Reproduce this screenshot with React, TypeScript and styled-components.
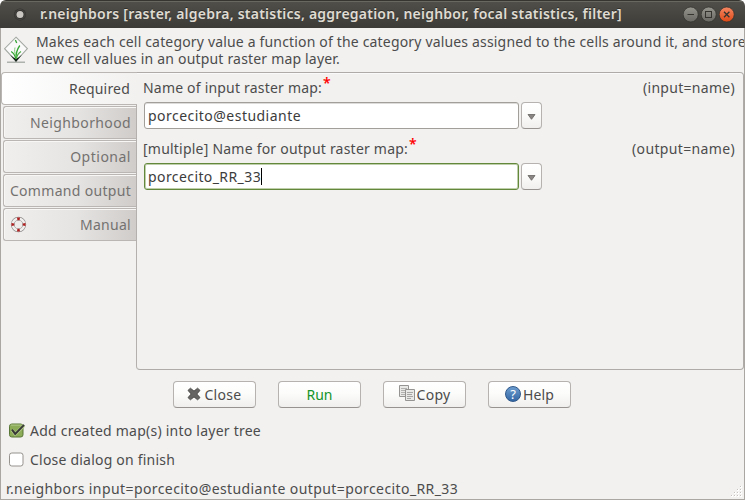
import React from 'react';
import styled, { createGlobalStyle, css } from 'styled-components';

const GlobalStyle = createGlobalStyle`
  *, *::before, *::after { box-sizing: border-box; }
  body { margin: 0; background: #fff; overflow: hidden; }
`;

const Window = styled.div`
  width: 745px;
  height: 500px;
  display: flex;
  flex-direction: column;
  overflow: hidden;
  border-radius: 6px 6px 0 0;
  background: #f2f1f0;
  color: #4c4c4c;
  font: 14px/17px "Noto Sans", "Open Sans", sans-serif;
  white-space: nowrap;
`;

const TitleBar = styled.header`
  height: 28px;
  flex: none;
  display: flex;
  align-items: center;
  padding: 0 10px 0 13px;
  color: #dfdbd2;
  background: linear-gradient(#504f49, #3c3b37);
  border-top: 1px solid #363530;
  box-shadow: inset 0 1px #686760;
`;

const Title = styled.h1`
  margin: -1px auto 0 13px;
  font-size: 14px;
  line-height: 18px;
  font-weight: 600;
  letter-spacing: 0.234px;
  text-shadow: 0 -1px #302f2b;
`;

const WindowControls = styled.div`
  display: flex;
  gap: 2px;
  svg { display: block; }
`;

const Body = styled.main`
  flex: 1;
  min-height: 0;
  display: flex;
  flex-direction: column;
  border: solid #aaa6a2;
  border-width: 0 1px 1px;
`;

const Text = styled.span<{ $ls?: number }>`
  letter-spacing: ${(p) => p.$ls ?? 0.2}px;
`;

const Intro = styled.div`
  height: 44px;
  flex: none;
  display: flex;
  padding: 5px 0 0 2px;
  overflow: hidden;
  svg { flex: none; margin-top: 3px; }
`;

const IntroLines = styled.div`
  display: flex;
  flex-direction: column;
  margin-left: 8px;
`;

const Notebook = styled.section`
  height: 298px;
  flex: none;
  display: flex;
`;

const TabList = styled.nav`
  width: 135px;
  flex: none;
  display: flex;
  flex-direction: column;
`;

const Tab = styled.div<{ $active?: boolean }>`
  display: flex;
  align-items: center;
  justify-content: flex-end;
  border: 1px solid #b9b6b3;
  border-right: 0;
  padding-right: 5px;
  ${(p) =>
    p.$active
      ? css`
          height: 33px;
          margin-right: -1px;
          padding-right: 7px;
          z-index: 1;
          border-radius: 4px 0 0 4px;
          background: linear-gradient(90deg, #fff, #f2f1f0);
        `
      : css`
          height: 33px;
          margin: 1px 0 0 2px;
          color: #747270;
          border-radius: 3px 0 0 3px;
          background: linear-gradient(90deg, #f0efee, #e6e4e2 55%, #cfccca);
          box-shadow: inset 1px 1px #f8f7f6;
        `}
  svg { margin: 0 auto 0 6px; }
`;

const Page = styled.div`
  flex: 1;
  border: 1px solid #aeaba8;
  border-radius: 0 4px 4px 4px;
  border-left-color: #b3b0ad;
  padding: 6px 8px 0 7px;
  box-shadow: inset 0 1px #fafafa;
`;

const FieldLabel = styled.div<{ $second?: boolean }>`
  height: 17px;
  display: flex;
  align-items: center;
  margin: ${(p) => (p.$second ? '11px' : '0')} 0 6px -1px;
`;

const Star = styled.sup`
  align-self: flex-start;
  color: #f00;
  font-size: 14px;
  line-height: 17px;
  margin: -5px auto 0 1px;
  font-weight: 600;
`;

const FieldRow = styled.div`
  display: flex;
  gap: 2px;
`;

const Entry = styled.div<{ $focused?: boolean }>`
  width: 375px;
  height: 27px;
  display: flex;
  align-items: center;
  padding: 0 0 0 3px;
  background: #fff;
  color: #3c3c3c;
  border-radius: 3px;
  border: 1px solid #a29e9a;
  ${(p) =>
    p.$focused
      ? css`border-color: #63883b; box-shadow: inset 0 0 0 1px #bfcfac;`
      : css`box-shadow: inset 0 1px #dedcda;`}
`;

const Caret = styled.span`
  width: 1px;
  height: 17px;
  background: #000;
`;

const raised = css`
  display: flex;
  align-items: center;
  justify-content: center;
  height: 27px;
  padding: 0;
  border: 1px solid #b5b2af;
  border-bottom-color: #979390;
  border-radius: 4px;
  background: linear-gradient(#fff, #fcfcfb 45%, #f0efee);
`;

const DropButton = styled.button`
  ${raised}
  padding-top: 2px;
  width: 21px;
`;

const ButtonRow = styled.div`
  display: flex;
  gap: 22px;
  margin: 11px 0 0 172px;
`;

const Button = styled.button<{ $color?: string; $gap?: number }>`
  ${raised}
  width: 83px;
  gap: ${(p) => p.$gap ?? 2}px;
  font: inherit;
  color: ${(p) => p.$color ?? '#4c4c4c'};
  svg { margin-top: -2px; }
`;

const Options = styled.div`
  display: flex;
  flex-direction: column;
  gap: 12px;
  margin: 14px 0 0 7px;
`;

const CheckRow = styled.label`
  height: 17px;
  display: flex;
  align-items: center;
  gap: 5px;
`;

const StatusBar = styled.footer`
  flex: 1;
  display: flex;
  align-items: flex-end;
  justify-content: space-between;
  padding: 0 2px 2px 5px;
`;

const WindowIcon = () => (
  <svg width="14" height="14" viewBox="0 0 14 14">
    <circle cx="7" cy="6.5" r="6" fill="#33322f" />
    <circle cx="7" cy="6.5" r="5" fill="none" stroke="#484743" />
    <circle cx="7" cy="6.5" r="3.5" fill="#c9c6c2" />
  </svg>
);

const Control = ({ kind }: { kind: 'min' | 'max' | 'close' }) => (
  <svg width="16" height="17" viewBox="0 0 16 17">
    <defs>
      <linearGradient id={`control-${kind}`} x2="0" y2="1">
        <stop stopColor={kind === 'close' ? '#f58863' : '#96958e'} />
        <stop offset="1" stopColor={kind === 'close' ? '#dd4816' : '#686761'} />
      </linearGradient>
    </defs>
    <circle cx="7.7" cy="8.5" r="7.5" fill={`url(#control-${kind})`} stroke="#30302c" strokeWidth=".7" />
    <g fill="none" stroke="#35342f" strokeWidth="1">
      {kind === 'min' && <path d="M4.5 8.5h6.5" />}
      {kind === 'max' && <rect x="4.5" y="5.5" width="6" height="6" />}
      {kind === 'close' && <path d="m5 5.8 5.4 5.4m0-5.4L5 11.2" strokeWidth="1.3" />}
    </g>
  </svg>
);

const GrassIcon = () => (
  <svg width="25" height="29" viewBox="0 0 25 29">
    <path d="M4 26.2h18" stroke="#aeb2ad" strokeWidth="1.4" />
    <path d="M13 1.2 24.4 12.7 13 25 1.6 12.7Z" fill="#fafafa" stroke="#a3a8a2" strokeWidth="1.1" />
    <path d="m7 18.8 6 7.2 6-7.2-4 3-2 .7-2-.7Z" fill="#16241a" />
    <g fill="none" stroke="#35a535" strokeWidth="1.3">
      <path d="M12.8 23C12 19 10.5 17 8.2 15.5" />
      <path d="M13 23c-.2-4 .6-9 3.8-13.5" />
      <path d="M13.3 23c.6-3.5 2.2-6 4.7-7.5" stroke="#4baf45" />
      <path d="M12.6 19.5C11.5 16.5 11.4 14 12 11.5" stroke="#82cb79" strokeWidth="1" />
      <path d="m12.4 4 1.3 3" />
    </g>
  </svg>
);

const ManualIcon = () => (
  <svg width="17" height="17" viewBox="0 0 17 17">
    <circle cx="8.5" cy="8.5" r="5.8" fill="none" stroke="#8f8d8b" strokeWidth="3.8" />
    <circle cx="8.5" cy="8.5" r="5.8" fill="none" stroke="#f1efee" strokeWidth="2.4" />
    <path d="M7 1.5h3l-.4 2.7H7.4ZM7 15.5h3l-.4-2.7H7.4ZM1.5 7v3l2.7-.4V7.4ZM15.5 7v3l-2.7-.4V7.4Z" fill="#ae2020" />
  </svg>
);

const ArrowIcon = () => (
  <svg width="9" height="6" viewBox="0 0 9 6">
    <path d="M1 .5h7L4.5 5.3Z" fill="#888583" stroke="#666360" strokeWidth=".8" />
  </svg>
);

const CloseIcon = () => (
  <svg width="14" height="14" viewBox="0 0 14 14">
    <path d="m1 3.4 2.4-2.2L7 4.1l3.6-2.9L13 3.4 9.8 7l3.2 3.6-2.4 2.2L7 9.9l-3.6 2.9L1 10.6 4.2 7Z" fill="#666563" stroke="#474644" strokeWidth=".9" strokeLinejoin="round" />
  </svg>
);

const CopyIcon = () => (
  <svg width="16" height="17" viewBox="0 0 16 17">
    <g fill="#e9e9e8" stroke="#969492">
      <path d="M.5.5h9v11h-9Z" />
      <path d="M2 3.5h6M2 5.5h6M2 7.5h6M2 9.5h5" stroke="#b3b1af" />
      <path d="M6.5 4.5h9v11h-9Z" />
      <path d="M8 7.5h6M8 9.5h5M8 11.5h6M8 13.5h4" stroke="#a8a6a4" />
    </g>
  </svg>
);

const HelpGlyph = styled.span`
  width: 16px;
  height: 16px;
  margin-top: -2px;
  border-radius: 50%;
  border: 1px solid #2e578a;
  background: linear-gradient(#6c9cce, #3467a5);
  color: #fff;
  font-size: 13px;
  line-height: 14px;
  text-align: center;
`;

const CheckBox = ({ checked }: { checked?: boolean }) => (
  <svg width="17" height="17" viewBox="0 0 17 17">
    <rect x="1.5" y="2" width="13.5" height="13" rx="2.3" fill={checked ? '#8cac57' : '#fff'} stroke={checked ? '#597736' : '#96928e'} />
    {checked && (
      <>
        <path d="M2.6 3.1h11.3" stroke="#b3ca8b" />
        <path d="m4 8 3.2 4.2 8.8-8.7" fill="none" stroke="#b6cd8e" strokeWidth="3.2" />
        <path d="m4 7.7 3.2 4.2 8.9-9" fill="none" stroke="#373936" strokeWidth="2" />
      </>
    )}
  </svg>
);

const gripDots = [[10, 1], [7, 4], [10, 4], [4, 7], [7, 7], [10, 7], [1, 10], [4, 10], [7, 10], [10, 10]];

const Grip = () => (
  <svg width="12" height="12" viewBox="0 0 12 12">
    {gripDots.map(([x, y]) => (
      <g key={`${x}-${y}`}>
        <rect x={x} y={y} width="2" height="2" fill="#fff" />
        <rect x={x} y={y} width="1" height="1" fill="#c4c1be" />
      </g>
    ))}
  </svg>
);

export default function App() {
  return (
    <>
      <GlobalStyle />
      <Window>
        <TitleBar>
          <WindowIcon />
          <Title>r.neighbors [raster, algebra, statistics, aggregation, neighbor, focal statistics, filter]</Title>
          <WindowControls>
            <Control kind="min" />
            <Control kind="max" />
            <Control kind="close" />
          </WindowControls>
        </TitleBar>
        <Body>
          <Intro>
            <GrassIcon />
            <IntroLines>
              <Text $ls={0.17}>Makes each cell category value a function of the category values assigned to the cells around it, and store</Text>
              <Text $ls={0.185}>new cell values in an output raster map layer.</Text>
            </IntroLines>
          </Intro>
          <Notebook>
            <TabList>
              <Tab $active><Text $ls={0.19}>Required</Text></Tab>
              <Tab><Text $ls={0.37}>Neighborhood</Text></Tab>
              <Tab><Text $ls={0.5}>Optional</Text></Tab>
              <Tab><Text $ls={0.31}>Command output</Text></Tab>
              <Tab><ManualIcon /><Text $ls={0.28}>Manual</Text></Tab>
            </TabList>
            <Page>
              <FieldLabel>
                <Text>Name of input raster map:</Text>
                <Star>*</Star>
                <Text $ls={0.29}>(input=name)</Text>
              </FieldLabel>
              <FieldRow>
                <Entry><Text $ls={0.47}>porcecito@estudiante</Text></Entry>
                <DropButton><ArrowIcon /></DropButton>
              </FieldRow>
              <FieldLabel $second>
                <Text $ls={0.22}>[multiple] Name for output raster map:</Text>
                <Star>*</Star>
                <Text $ls={0.35}>(output=name)</Text>
              </FieldLabel>
              <FieldRow>
                <Entry $focused><Text $ls={0.41}>porcecito_RR_33</Text><Caret /></Entry>
                <DropButton><ArrowIcon /></DropButton>
              </FieldRow>
            </Page>
          </Notebook>
          <ButtonRow>
            <Button $gap={3}><CloseIcon /><Text $ls={0.3}>Close</Text></Button>
            <Button $color="#14942a"><Text $ls={0}>Run</Text></Button>
            <Button><CopyIcon /><Text $ls={0.3}>Copy</Text></Button>
            <Button><HelpGlyph>?</HelpGlyph><Text $ls={0.12}>Help</Text></Button>
          </ButtonRow>
          <Options>
            <CheckRow><CheckBox checked /><Text $ls={0.235}>Add created map(s) into layer tree</Text></CheckRow>
            <CheckRow><CheckBox /><Text $ls={0.21}>Close dialog on finish</Text></CheckRow>
          </Options>
          <StatusBar>
            <Text $ls={0.41}>r.neighbors input=porcecito@estudiante output=porcecito_RR_33</Text>
            <Grip />
          </StatusBar>
        </Body>
      </Window>
    </>
  );
}
